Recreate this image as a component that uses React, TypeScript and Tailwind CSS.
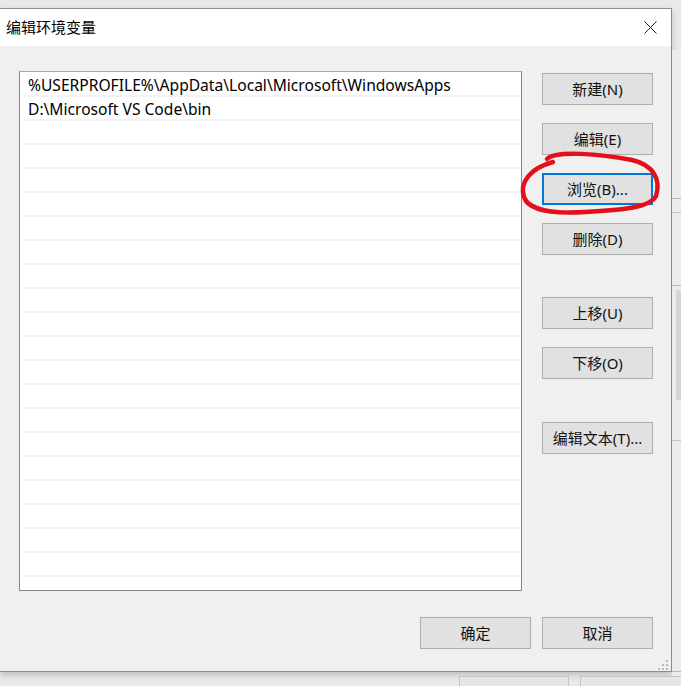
import React from "react";

const font = { fontFamily: '"Noto Sans", "Noto Sans CJK SC", sans-serif' };

function Btn({ label, focused }: { label: string; focused?: boolean }) {
  return (
    <div
      className={
        "flex h-[32px] w-[111px] items-center justify-center bg-[#e1e1e1] text-[15px] text-[#111] " +
        (focused ? "border-2 border-[#0078d7]" : "border border-[#adadad]")
      }
    >
      {label}
    </div>
  );
}

const paths = [
  "%USERPROFILE%\\AppData\\Local\\Microsoft\\WindowsApps",
  "D:\\Microsoft VS Code\\bin",
];

export default function App() {
  const rows = Array.from({ length: 22 }, (_, i) => paths[i] ?? "");

  return (
    <div className="relative h-[686px] w-[681px] overflow-hidden bg-[#e9e9e9]" style={font}>
      {/* desktop behind the dialog */}
      <div className="absolute right-0 top-[50px] h-[636px] w-[9px] bg-[#ececec]">
        <div className="mt-[148px] h-px bg-[#b9b9b9]" />
        <div className="mt-[13px] h-px bg-[#c8c8c8]" />
        <div className="mt-[72px] h-px bg-[#b9b9b9]" />
        <div className="ml-[4px] mt-[4px] h-[110px] w-[5px] bg-[#d6d6d6]" />
        <div className="mt-[40px] h-px bg-[#c8c8c8]" />
        <div className="mt-[230px] h-px bg-[#b9b9b9]" />
        <div className="mt-[14px] h-px bg-[#c8c8c8]" />
      </div>
      <div className="absolute bottom-0 left-[459px] h-[10px] w-[110px] border border-b-0 border-[#c4c4c4] bg-[#e6e6e6]" />
      <div className="absolute bottom-0 left-[580px] h-[10px] w-[110px] border border-b-0 border-[#c4c4c4] bg-[#e6e6e6]" />

      <div className="pt-[8px]">
        <div className="flex h-[664px] w-[672px] flex-col border-y border-r border-[#8c8c8c] bg-[#f0f0f0] shadow-[0_3px_6px_rgba(0,0,0,0.18)]">
          {/* title bar */}
          <div className="flex h-[37px] items-center justify-between bg-white pl-[6px] pr-[14px]">
            <span className="text-[15px] text-black">编辑环境变量</span>
            <svg width="13" height="13" viewBox="0 0 13 13">
              <path d="M0.5 0.5 L12.5 12.5 M12.5 0.5 L0.5 12.5" stroke="#222" strokeWidth="1" />
            </svg>
          </div>

          <div className="relative flex-1 pl-[19px] pt-[25px]">
            <div className="flex gap-[20px]">
              {/* list box */}
              <div className="h-[520px] w-[503px] overflow-hidden border border-[#828790] border-t-[#a9a9b0] bg-white px-[2px] pt-px">
                {rows.map((r, i) => (
                  <div
                    key={i}
                    className="flex h-[24px] items-center border-b-2 border-[#f3f3f3] pl-[6px] pt-[3px] text-[15.6px] leading-none text-black"
                  >
                    {r}
                  </div>
                ))}
              </div>

              {/* side buttons */}
              <div className="mt-[2px] flex flex-col">
                <div className="flex flex-col gap-[18px]">
                  <Btn label="新建(N)" />
                  <Btn label="编辑(E)" />
                  <Btn label="浏览(B)..." focused />
                  <Btn label="删除(D)" />
                </div>
                <div className="mt-[42px] flex flex-col gap-[18px]">
                  <Btn label="上移(U)" />
                  <Btn label="下移(O)" />
                </div>
                <div className="mt-[43px]">
                  <Btn label="编辑文本(T)..." />
                </div>
              </div>
            </div>

            <div className="mt-[26px] flex justify-end gap-[11px] pr-[18px]">
              <Btn label="确定" />
              <Btn label="取消" />
            </div>

            {/* resize grip */}
            <svg className="absolute bottom-[1px] right-[3px]" width="10" height="10" viewBox="0 0 10 10">
              <rect x="8" y="0" width="2" height="2" fill="#b8b8b8" />
              <rect x="8" y="4" width="2" height="2" fill="#b8b8b8" />
              <rect x="8" y="8" width="2" height="2" fill="#b8b8b8" />
              <rect x="4" y="4" width="2" height="2" fill="#b8b8b8" />
              <rect x="4" y="8" width="2" height="2" fill="#b8b8b8" />
              <rect x="0" y="8" width="2" height="2" fill="#b8b8b8" />
            </svg>
          </div>
        </div>
      </div>

      {/* red hand-drawn circle */}
      <svg className="pointer-events-none absolute left-0 top-0" width="681" height="686">
        <path
          d="M547 159 C556 150 600 154 632 160 C654 165 661 180 656 196 C650 208 620 210 585 212 C553 214 528 210 524 197 C519 182 531 168 553 162"
          fill="none"
          stroke="#e3101b"
          strokeWidth="4.5"
          strokeLinecap="round"
        />
      </svg>
    </div>
  );
}
